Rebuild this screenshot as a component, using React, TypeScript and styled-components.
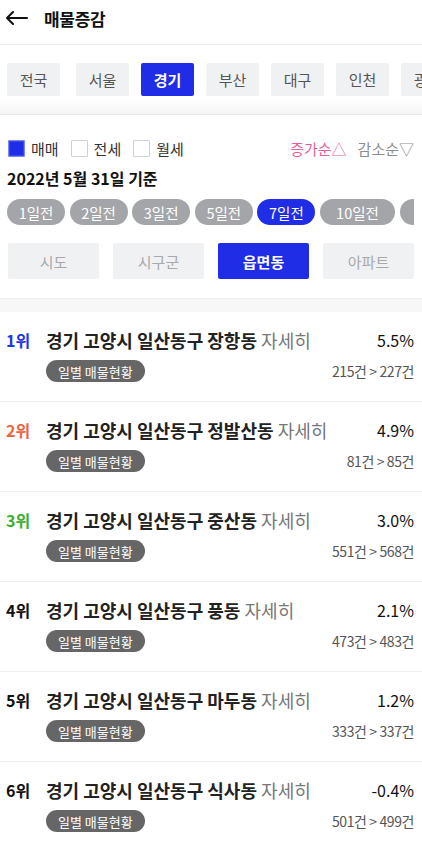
import React from "react";
import styled, { createGlobalStyle } from "styled-components";

const Global = createGlobalStyle`
  html, body { margin: 0; padding: 0; background: #fff; }
  body { font-family: "Noto Sans CJK KR", "Noto Sans", sans-serif; color: #111; }
  * { box-sizing: border-box; }
`;

const Page = styled.div`
  width: 422px;
  overflow: hidden;
  background: #fff;
`;

const Header = styled.header`
  height: 45px;
  display: flex;
  align-items: center;
  padding-left: 5px;
  border-bottom: 1px solid #ececec;
`;

const Back = styled.svg`
  width: 23px;
  height: 14px;
  margin-right: 16px;
  margin-top: -8px;
`;

const Title = styled.h1`
  margin: -8px 0 0 0;
  font-size: 17px;
  font-weight: 700;
  letter-spacing: -0.3px;
  color: #111;
`;

const RegionBar = styled.div`
  padding: 18px 0 0 7px;
  height: 70px;
  background: linear-gradient(to bottom, #fff 0, #fff 54px, #f6f6f6 68px);
  border-bottom: 1px solid #e9e9e9;
`;

const RegionRow = styled.div`
  display: flex;
  gap: 12px;
  white-space: nowrap;
`;

const RegionChip = styled.div<{ $active?: boolean }>`
  flex: 0 0 53px;
  height: 33px;
  border-radius: 2px;
  display: flex;
  align-items: center;
  justify-content: center;
  font-size: 15px;
  font-weight: ${(p) => (p.$active ? 700 : 400)};
  background: ${(p) => (p.$active ? "#1f2ee6" : "#f0f1f3")};
  color: ${(p) => (p.$active ? "#fff" : "#555")};
  &:first-child {
    margin-right: 4px;
  }
`;

const Filters = styled.section`
  padding: 23px 8px 19px 8px;
`;

const TopLine = styled.div`
  display: flex;
  align-items: center;
  justify-content: space-between;
  height: 20px;
`;

const Checks = styled.div`
  display: flex;
  align-items: center;
  gap: 12px;
`;

const CheckItem = styled.label`
  display: flex;
  align-items: center;
  gap: 6px;
  font-size: 15px;
  color: #333;
`;

const Box = styled.span<{ $checked?: boolean }>`
  width: 17px;
  height: 17px;
  border-radius: 1px;
  border: 1.5px solid ${(p) => (p.$checked ? "#7b84f2" : "#cfd2da")};
  background: ${(p) => (p.$checked ? "#1f2ee6" : "#fff")};
  box-shadow: ${(p) => (p.$checked ? "inset 0 0 0 1px #3a47ea" : "none")};
`;

const Sorts = styled.div`
  display: flex;
  gap: 11px;
  font-size: 15px;
`;

const Sort = styled.span<{ $active?: boolean }>`
  color: ${(p) => (p.$active ? "#e4609a" : "#8e8e8e")};
`;

const DateLine = styled.div`
  margin-top: 10px;
  font-size: 16px;
  font-weight: 700;
  color: #111;
  height: 20px;
  line-height: 20px;
  margin-left: -1px;
`;

const DayRow = styled.div`
  margin-top: 11px;
  margin-left: -1px;
  display: flex;
  gap: 4.6px;
  overflow: hidden;
  white-space: nowrap;
`;

const DayChip = styled.div<{ $active?: boolean; $wide?: boolean }>`
  flex: 0 0 ${(p) => (p.$wide ? "75px" : "58px")};
  height: 26px;
  border-radius: 13px;
  display: flex;
  align-items: center;
  justify-content: center;
  font-size: 14.5px;
  color: #fff;
  background: ${(p) => (p.$active ? "#1f2ee6" : "#a4a5a9")};
`;

const Tabs = styled.div`
  margin-top: 18px;
  display: grid;
  grid-template-columns: repeat(4, 1fr);
  gap: 14px;
`;

const Tab = styled.div<{ $active?: boolean }>`
  height: 36px;
  border-radius: 2px;
  display: flex;
  align-items: center;
  justify-content: center;
  font-size: 15px;
  font-weight: ${(p) => (p.$active ? 700 : 400)};
  background: ${(p) => (p.$active ? "#1f2ee6" : "#f0f1f3")};
  color: ${(p) => (p.$active ? "#fff" : "#a9a9ab")};
`;

const Band = styled.div`
  height: 14px;
  background: #f7f7f7;
  border-top: 1px solid #eeeeee;
`;

const Row = styled.div`
  display: flex;
  padding: 16px 8px 19px 6px;
  border-bottom: 1px solid #f0f0f0;
`;

const Rank = styled.div<{ $color: string }>`
  width: 40px;
  font-size: 16px;
  font-weight: 700;
  line-height: 24px;
  color: ${(p) => p.$color};
`;

const Main = styled.div`
  flex: 1;
  display: flex;
  flex-direction: column;
  gap: 8px;
`;

const TitleLine = styled.div`
  display: flex;
  justify-content: space-between;
  align-items: center;
  height: 24px;
`;

const Name = styled.div`
  font-size: 18px;
  font-weight: 700;
  color: #222;
`;

const More = styled.span`
  font-weight: 400;
  color: #777;
`;

const Pct = styled.div`
  font-size: 16px;
  color: #111;
`;

const SubLine = styled.div`
  display: flex;
  justify-content: space-between;
  align-items: center;
  height: 22px;
`;

const Tag = styled.span`
  height: 22px;
  padding: 0 12px;
  border-radius: 11px;
  background: #666;
  color: #fff;
  font-size: 13px;
  display: flex;
  align-items: center;
`;

const Count = styled.div`
  font-size: 14px;
  color: #555;
  letter-spacing: -0.4px;
`;

const regions = ["전국", "서울", "경기", "부산", "대구", "인천", "광주", "대전"];
const days = ["1일전", "2일전", "3일전", "5일전", "7일전", "10일전", "30일전"];
const tabs = ["시도", "시구군", "읍면동", "아파트"];

const rows = [
  { rank: "1위", color: "#1d36e6", dong: "장항동", pct: "5.5%", count: "215건 > 227건" },
  { rank: "2위", color: "#f0633f", dong: "정발산동", pct: "4.9%", count: "81건 > 85건" },
  { rank: "3위", color: "#3aae2e", dong: "중산동", pct: "3.0%", count: "551건 > 568건" },
  { rank: "4위", color: "#111", dong: "풍동", pct: "2.1%", count: "473건 > 483건" },
  { rank: "5위", color: "#111", dong: "마두동", pct: "1.2%", count: "333건 > 337건" },
  { rank: "6위", color: "#111", dong: "식사동", pct: "-0.4%", count: "501건 > 499건" },
];

export default function App() {
  return (
    <Page>
      <Global />
      <Header>
        <Back viewBox="0 0 23 14" fill="none">
          <path d="M22 7H2M8 1L2 7l6 6" stroke="#111" strokeWidth="2" strokeLinecap="round" strokeLinejoin="round" />
        </Back>
        <Title>매물증감</Title>
      </Header>
      <RegionBar>
        <RegionRow>
          {regions.map((r) => (
            <RegionChip key={r} $active={r === "경기"}>{r}</RegionChip>
          ))}
        </RegionRow>
      </RegionBar>
      <Filters>
        <TopLine>
          <Checks>
            <CheckItem><Box $checked />매매</CheckItem>
            <CheckItem><Box />전세</CheckItem>
            <CheckItem><Box />월세</CheckItem>
          </Checks>
          <Sorts>
            <Sort $active>증가순△</Sort>
            <Sort>감소순▽</Sort>
          </Sorts>
        </TopLine>
        <DateLine>2022년 5월 31일 기준</DateLine>
        <DayRow>
          {days.map((d) => (
            <DayChip key={d} $active={d === "7일전"} $wide={d.length > 3}>{d}</DayChip>
          ))}
        </DayRow>
        <Tabs>
          {tabs.map((t) => (
            <Tab key={t} $active={t === "읍면동"}>{t}</Tab>
          ))}
        </Tabs>
      </Filters>
      <Band />
      {rows.map((r) => (
        <Row key={r.rank}>
          <Rank $color={r.color}>{r.rank}</Rank>
          <Main>
            <TitleLine>
              <Name>경기 고양시 일산동구 {r.dong} <More>자세히</More></Name>
              <Pct>{r.pct}</Pct>
            </TitleLine>
            <SubLine>
              <Tag>일별 매물현황</Tag>
              <Count>{r.count}</Count>
            </SubLine>
          </Main>
        </Row>
      ))}
    </Page>
  );
}
